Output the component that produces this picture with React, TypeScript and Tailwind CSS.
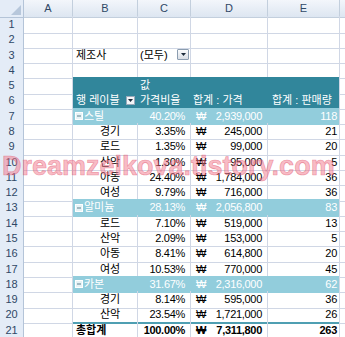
import React from "react";

const COLS = "grid grid-cols-[24px_49px_65px_53px_77px_72px_5px] flex-1 min-h-0";
const FONT = { fontFamily: "'Liberation Sans','Noto Sans CJK KR',sans-serif" };

type Kind = "empty" | "data" | "sub" | "total" | "h5" | "h6" | "r3";

type Row = {
  kind: Kind;
  label?: string;
  pct?: string;
  price?: string;
  qty?: string;
};

const rows: Row[] = [
  { kind: "empty" },
  { kind: "empty" },
  { kind: "r3" },
  { kind: "empty" },
  { kind: "h5" },
  { kind: "h6" },
  { kind: "sub", label: "스틸", pct: "40.20%", price: "2,939,000", qty: "118" },
  { kind: "data", label: "경기", pct: "3.35%", price: "245,000", qty: "21" },
  { kind: "data", label: "로드", pct: "1.35%", price: "99,000", qty: "20" },
  { kind: "data", label: "산악", pct: "1.30%", price: "95,000", qty: "5" },
  { kind: "data", label: "아동", pct: "24.40%", price: "1,784,000", qty: "36" },
  { kind: "data", label: "여성", pct: "9.79%", price: "716,000", qty: "36" },
  { kind: "sub", label: "알미늄", pct: "28.13%", price: "2,056,800", qty: "83" },
  { kind: "data", label: "로드", pct: "7.10%", price: "519,000", qty: "13" },
  { kind: "data", label: "산악", pct: "2.09%", price: "153,000", qty: "5" },
  { kind: "data", label: "아동", pct: "8.41%", price: "614,800", qty: "20" },
  { kind: "data", label: "여성", pct: "10.53%", price: "770,000", qty: "45" },
  { kind: "sub", label: "카본", pct: "31.67%", price: "2,316,000", qty: "62" },
  { kind: "data", label: "경기", pct: "8.14%", price: "595,000", qty: "36" },
  { kind: "data", label: "산악", pct: "23.54%", price: "1,721,000", qty: "26" },
  { kind: "total", label: "총합계", pct: "100.00%", price: "7,311,800", qty: "263" },
];

const G = "border-r border-b border-[#d0d7e5]";
const CELL = "flex items-center overflow-hidden whitespace-nowrap";

function RowHead({ n }: { n: number }) {
  return (
    <div className="flex items-center justify-center bg-[#e4ecf7] border-r border-b border-[#b4c4d8] text-[11px] text-[#2f4866]">
      {n}
    </div>
  );
}

function SmallDrop() {
  return (
    <div className="ml-auto mr-[2px] w-[9px] h-[9px] bg-[#f4f6f8] border border-[#9aaabb] flex items-center justify-center">
      <svg width="5" height="3" viewBox="0 0 5 3">
        <path d="M0 0 L5 0 L2.5 3 Z" fill="#1b2a3a" />
      </svg>
    </div>
  );
}

function BigDrop() {
  return (
    <div className="ml-auto mr-[1px] w-[12px] h-[11px] rounded-[1px] bg-gradient-to-b from-[#fbfcfd] to-[#d9dee5] border border-[#8c9db0] flex items-center justify-center">
      <svg width="5" height="3" viewBox="0 0 5 3">
        <path d="M0 0 L5 0 L2.5 3 Z" fill="#1b2a3a" />
      </svg>
    </div>
  );
}

function MinusBox() {
  return (
    <svg width="8" height="8" viewBox="0 0 8 8" className="mr-[1px] shrink-0">
      <rect x="0.5" y="0.5" width="7" height="7" fill="#e6f3f6" stroke="#ffffff" />
      <line x1="2" y1="4" x2="6" y2="4" stroke="#5d7f8e" strokeWidth="1" />
    </svg>
  );
}

function PivotRow({ r, n }: { r: Row; n: number }) {
  const idx = n;
  if (r.kind === "empty") {
    return (
      <div className={COLS}>
        <RowHead n={idx} />
        <div className={G} />
        <div className={G} />
        <div className={G} />
        <div className={G} />
        <div className={G} />
        <div className="border-b border-[#d0d7e5]" />
      </div>
    );
  }
  if (r.kind === "r3") {
    return (
      <div className={COLS}>
        <RowHead n={idx} />
        <div className={G} />
        <div className={`${G} ${CELL} pl-[3px]`}>제조사</div>
        <div className={`${G} ${CELL} pl-[2px]`}>
          <span>(모두)</span>
          <BigDrop />
        </div>
        <div className={G} />
        <div className={G} />
        <div className="border-b border-[#d0d7e5]" />
      </div>
    );
  }
  if (r.kind === "h5" || r.kind === "h6") {
    const T = "bg-[#31869b] text-white border-r border-b border-[#31869b]";
    return (
      <div className={COLS}>
        <RowHead n={idx} />
        <div className={G} />
        {r.kind === "h5" ? (
          <>
            <div className={T} />
            <div className={`${T} ${CELL} pl-[2px]`}>값</div>
            <div className={T} />
            <div className={`${T} border-r-[#d0d7e5]`} />
          </>
        ) : (
          <>
            <div className={`${T} ${CELL} pl-[3px]`}>
              <span>행 레이블</span>
              <SmallDrop />
            </div>
            <div className={`${T} ${CELL} pl-[2px]`}>가격비율</div>
            <div className={`${T} ${CELL} pl-[2px]`}>합계 : 가격</div>
            <div className={`${T} ${CELL} pl-[4px] border-r-[#d0d7e5]`}>합계 : 판매량</div>
          </>
        )}
        <div className="border-b border-[#d0d7e5]" />
      </div>
    );
  }
  const isSub = r.kind === "sub";
  const isTotal = r.kind === "total";
  const beforeTotal = n === 20;
  const base = isSub
    ? "bg-[#92cddc] text-white border-r border-b border-[#92cddc]"
    : beforeTotal
    ? "border-r border-[#d0d7e5] border-b-2 border-b-[#4f9fb2]"
    : G;
  const weight = isTotal ? "font-bold" : "";
  const lastBorder = isSub ? "border-r-[#d0d7e5]" : "";
  return (
    <div className={COLS}>
      <RowHead n={idx} />
      <div className={G} />
      <div className={`${base} ${CELL} ${weight} ${isSub ? "pl-[2px]" : isTotal ? "pl-[3px]" : "pl-[27px]"}`}>
        {isSub && <MinusBox />}
        <span>{r.label}</span>
      </div>
      <div className={`${base} ${CELL} ${weight} justify-end pr-[5px] tracking-[-0.3px]`}>{r.pct}</div>
      <div className={`${base} ${CELL} ${weight} pl-[5px] pr-[5px] tracking-[-0.3px]`}>
        <span>₩</span>
        <span className="ml-auto">{r.price}</span>
      </div>
      <div className={`${base} ${CELL} ${weight} ${lastBorder} justify-end pr-[2px] tracking-[-0.3px]`}>{r.qty}</div>
      <div className="border-b border-[#d0d7e5]" />
    </div>
  );
}

export default function App() {
  const letters = ["A", "B", "C", "D", "E"];
  return (
    <div className="relative w-[345px] h-[337px] bg-white overflow-hidden text-[11px] text-black" style={FONT}>
      <div className="flex flex-col h-[337px]">
        <div className="grid grid-cols-[24px_49px_65px_53px_77px_72px_5px] h-[16px] shrink-0">
          <div className="relative bg-[#e4ecf7] border-r border-b border-[#b4c4d8]">
            <svg width="10" height="10" viewBox="0 0 10 10" className="absolute right-[2px] bottom-[2px]">
              <path d="M10 0 L10 10 L0 10 Z" fill="#b7c7db" />
            </svg>
          </div>
          {letters.map((l) => (
            <div
              key={l}
              className="flex items-center justify-center bg-gradient-to-b from-[#f3f6fb] to-[#dde6f1] border-r border-b border-[#c3cfdd] text-[11px] text-[#2f4866]"
            >
              {l}
            </div>
          ))}
          <div className="bg-gradient-to-b from-[#f3f6fb] to-[#dde6f1] border-b border-[#c3cfdd]" />
        </div>
        {rows.map((r, i) => (
          <PivotRow key={i} r={r} n={i + 1} />
        ))}
      </div>
      <div
        className="absolute left-[2px] top-[153px] text-[27px] leading-[27px] font-bold whitespace-nowrap text-[rgba(242,120,140,0.5)] [-webkit-text-stroke:0.6px_rgba(220,70,95,0.5)] pointer-events-none"
        style={{ fontFamily: "'Liberation Sans',Arial,sans-serif" }}
      >
        Dreamzelkova.tistory.com
      </div>
    </div>
  );
}
